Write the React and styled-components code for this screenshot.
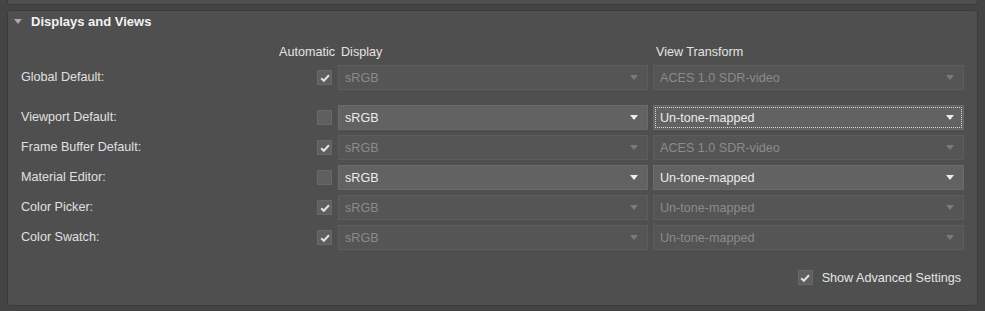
import styled, { createGlobalStyle } from 'styled-components'

const Global = createGlobalStyle`
    html, body {
        margin: 0;
        padding: 0;
        background: #444444;
        font-family: "Liberation Sans", Arial, sans-serif;
        font-size: 12.6px;
    }
`
const Page = styled.div`
    width: 985px;
    height: 311px;
    overflow: hidden;
    padding: 0 7px;
    box-sizing: border-box;
    display: flex;
    flex-direction: column;
`
const PrevPanel = styled.div`
    height: 4px;
    margin: 0 0 5px;
    background: #4f4f4f;
    border: 1px solid #3b3b3b;
    border-top: none;
    border-radius: 0 0 3px 3px;
    flex: none;
`
const Panel = styled.div`
    height: 296px;
    background: #4f4f4f;
    border: 1px solid #3b3b3b;
    border-radius: 3px;
    box-sizing: border-box;
    display: flex;
    flex-direction: column;
    padding: 0 13px 0 13px;
`
const Header = styled.div`
    display: flex;
    align-items: center;
    height: 20px;
    margin-left: -7px;
    gap: 9px;
    color: #f2f2f2;
    font-weight: bold;
    font-size: 13px;
`
const Caret = styled.span`
    width: 0;
    height: 0;
    border-left: 4px solid transparent;
    border-right: 4px solid transparent;
    border-top: 5px solid #a9a9a9;
`
const Grid = styled.div`
    display: grid;
    grid-template-columns: 1fr 16px 310px 311px;
    column-gap: 5px;
    row-gap: 5px;
    margin-top: 13px;
    align-items: center;
`
const ColHead = styled.div`
    color: #e4e4e4;
    height: 17px;
    line-height: 17px;
    grid-column: ${p => p.$col};
    justify-self: ${p => p.$right ? 'end' : 'start'};
    padding-left: ${p => p.$right ? '0' : '3px'};
    margin-right: ${p => p.$right ? '-2px' : '0'};
    margin-bottom: -1px;
`
const Label = styled.div`
    color: #e0e0e0;
    height: 25px;
    line-height: 25px;
`
const Spacer = styled.div`
    grid-column: 1 / -1;
    height: 5px;
`
const Box = styled.span`
    width: 15px;
    height: 15px;
    box-sizing: border-box;
    background: #5f5f5f;
    border: 1px solid #686868;
    display: flex;
    align-items: center;
    justify-content: center;
`
const Select = styled.div`
    height: 25px;
    box-sizing: border-box;
    background: ${p => p.$on ? '#626262' : '#555555'};
    border: 1px solid ${p => p.$on ? '#6a6a6a' : '#5d5d5d'};
    color: ${p => p.$on ? '#ececec' : '#8b8b8b'};
    display: flex;
    align-items: center;
    justify-content: space-between;
    padding: 0 9px 0 6px;
    position: relative;
    ${p => p.$focus && `
        &::after {
            content: '';
            position: absolute;
            inset: 1px;
            border: 1px dotted #d8d8d8;
        }
    `}
`
const Arrow = styled.span`
    width: 0;
    height: 0;
    border-left: 4px solid transparent;
    border-right: 4px solid transparent;
    border-top: 5px solid ${p => p.$on ? '#ececec' : '#7b7b7b'};
`
const Footer = styled.div`
    display: flex;
    justify-content: flex-end;
    align-items: center;
    gap: 9px;
    margin-top: 20px;
    margin-right: 3px;
    color: #e4e4e4;
`

const Check = ({ on }) => (
    <Box>
        {on && (
            <svg width="10" height="8" viewBox="0 0 10 8">
                <path d="M1.2 4.2 L3.8 6.8 L9 1.2" fill="none" stroke="#e2e2e2" strokeWidth="2" />
            </svg>
        )}
    </Box>
)

const rows = [
    { label: 'Global Default:', auto: true, display: 'sRGB', view: 'ACES 1.0 SDR-video' },
    { gap: true },
    { label: 'Viewport Default:', auto: false, display: 'sRGB', view: 'Un-tone-mapped', focus: true },
    { label: 'Frame Buffer Default:', auto: true, display: 'sRGB', view: 'ACES 1.0 SDR-video' },
    { label: 'Material Editor:', auto: false, display: 'sRGB', view: 'Un-tone-mapped' },
    { label: 'Color Picker:', auto: true, display: 'sRGB', view: 'Un-tone-mapped' },
    { label: 'Color Swatch:', auto: true, display: 'sRGB', view: 'Un-tone-mapped' },
]

const App = () => {
    return (
        <Page>
            <Global />
            <PrevPanel />
            <Panel>
                <Header><Caret />Displays and Views</Header>
                <Grid>
                    <ColHead $col="1 / 3" $right>Automatic</ColHead>
                    <ColHead $col="3">Display</ColHead>
                    <ColHead $col="4">View Transform</ColHead>
                    {rows.map((r, i) => r.gap ? <Spacer key={i} /> : [
                        <Label key={i + 'l'}>{r.label}</Label>,
                        <Check key={i + 'c'} on={r.auto} />,
                        <Select key={i + 'd'} $on={!r.auto}>{r.display}<Arrow $on={!r.auto} /></Select>,
                        <Select key={i + 'v'} $on={!r.auto} $focus={r.focus}>{r.view}<Arrow $on={!r.auto} /></Select>,
                    ])}
                </Grid>
                <Footer><Check on />Show Advanced Settings</Footer>
            </Panel>
        </Page>
    )
}

export default App
